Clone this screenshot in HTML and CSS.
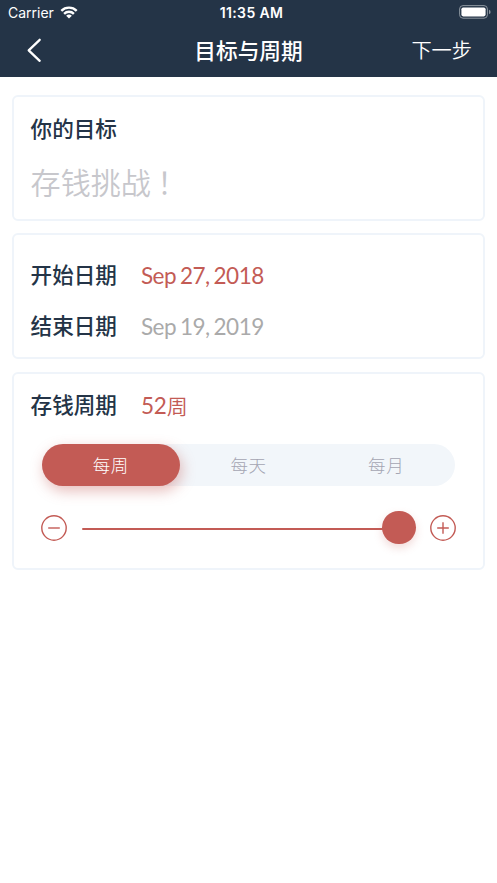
FILE: index.html
```html
<!DOCTYPE html>
<html lang="zh-CN">
<head>
<meta charset="utf-8">
<title>目标与周期</title>
<link rel="stylesheet" href="styles.css">
</head>
<body>
<header class="header">
  <div class="status">
    <div class="carrier">Carrier
      <svg class="wifi" width="18" height="13" viewBox="0 0 18 13" fill="none" stroke="#fff" stroke-width="2.4"><path d="M1.3 4.8a11 11 0 0 1 15.4 0"/><path d="M4.1 7.8a7 7 0 0 1 9.8 0"/><path d="M6.1 9.8a4.2 4.2 0 0 1 5.8 0L9 12.5z" fill="#fff" stroke="none"/></svg>
    </div>
    <div class="time">11:35 AM</div>
    <svg class="battery" width="32" height="14" viewBox="0 0 32 14"><rect x=".6" y=".6" width="27.8" height="12.6" rx="3.4" fill="none" stroke="#8c959f"/><rect x="2.4" y="2.4" width="24.2" height="9" rx="1.8" fill="#fff"/><path d="M30 4.7q1.6.5 1.6 2.2T30 9.1z" fill="#8c959f"/></svg>
  </div>
  <nav class="nav">
    <svg class="back" width="16" height="26" viewBox="0 0 16 26" fill="none" stroke="#fff" stroke-width="2.3" stroke-linecap="round" stroke-linejoin="round"><path d="M13.7 2.8 2.7 13.3l11 10.5"/></svg>
    <h1 class="title">目标与周期</h1>
    <span class="next">下一步</span>
  </nav>
</header>
<main class="content">
  <section class="card goal">
    <h2 class="label">你的目标</h2>
    <div class="placeholder">存钱挑战<span class="mark">！</span></div>
  </section>
  <section class="card dates">
    <div class="row"><h2 class="label">开始日期</h2><span class="value accent">Sep 27, 2018</span></div>
    <div class="row"><h2 class="label">结束日期</h2><span class="value muted">Sep 19, 2019</span></div>
  </section>
  <section class="card period">
    <div class="row"><h2 class="label">存钱周期</h2><span class="value count accent">52<span class="unit">周</span></span></div>
    <div class="tabs"><span class="tab active">每周</span><span class="tab">每天</span><span class="tab">每月</span></div>
    <div class="slider">
      <svg class="step" width="26" height="26" viewBox="0 0 26 26"><circle cx="13" cy="13" r="12.2"/><path d="M7.2 13h11.6"/></svg>
      <div class="track"><div class="line"></div><div class="knob"></div></div>
      <svg class="step" width="26" height="26" viewBox="0 0 26 26"><circle cx="13" cy="13" r="12.2"/><path d="M7.2 13h11.6M13 7.2v11.6"/></svg>
    </div>
  </section>
</main>
</body>
</html>
```
FILE: styles.css
```css
* { box-sizing: border-box; }
body {
  margin: 0;
  background: #fff;
  color: #243447;
  font-family: Lato, "Noto Sans CJK SC", sans-serif;
}
h1, h2 { margin: 0; font-weight: 500; }
.header { height: 77px; background: #243447; color: #fff; }
.status {
  display: grid;
  grid-template-columns: 1fr auto 1fr;
  align-items: center;
  height: 26px;
  padding: 0 6px 0 8px;
  font: 14px/26px Inter, sans-serif;
}
.carrier { display: flex; align-items: center; gap: 6px; }
.wifi { margin-top: -2px; }
.time { font-weight: 600; letter-spacing: .35px; margin-left: 4px; }
.battery { justify-self: end; margin-top: -2px; }
.nav {
  display: grid;
  grid-template-columns: 1fr auto 1fr;
  align-items: center;
  height: 47px;
  padding: 0 25px 0 26px;
}
.title { margin-left: -1px; font-family: "Noto Sans CJK SC", sans-serif; font-size: 21.7px; line-height: 32px; }
.next { justify-self: end; font: 350 20.2px/32px "Noto Sans CJK SC", sans-serif; }
.content { display: flex; flex-direction: column; gap: 12.3px; padding: 18px 12.4px 0; }
.card { border: 2px solid #eff4fa; border-radius: 6px; padding: 0 16.2px; }
.goal { height: 126.2px; padding-top: 15px; }
.label { font-family: "Noto Sans CJK SC", sans-serif; font-size: 21.6px; line-height: 32px; }
.placeholder {
  margin-top: 15px;
  font: 350 30.1px/44px "Noto Sans CJK SC", sans-serif;
  color: #c7c7cc;
}
.mark { margin-left: 6px; }
.dates { display: flex; flex-direction: column; gap: 19px; height: 126px; padding-top: 23.4px; }
.row { display: flex; align-items: center; gap: 24px; height: 32px; }
.value { margin-top: 2px; font-size: 22.5px; line-height: 32px; letter-spacing: -.5px; word-spacing: -1.4px; }
.count { letter-spacing: -.2px; }
.unit { font-size: 21px; font-weight: 350; }
.accent { color: #c35b55; }
.muted { color: #aaa; }
.period { height: 198px; padding-top: 15px; }
.row .label { margin-top: -1px; }
.tabs {
  display: flex;
  height: 42px;
  margin: 23.4px 11.4px 0;
  border-radius: 21px;
  background: #f2f6fa;
}
.tab {
  flex: 1;
  border-radius: 21px;
  text-align: center;
  font: 300 17.5px/41px "Noto Sans CJK SC", sans-serif;
  letter-spacing: .6px;
  color: #a4a5b2;
}
.active { background: #c35b55; color: #fff; box-shadow: 2px 5px 14px rgba(195, 91, 85, .4); }
.slider { display: flex; align-items: center; justify-content: space-between; margin: 24.6px 10.2px 0; height: 34px; }
.step { fill: none; stroke: #c35b55; stroke-width: 1.4; }
.track { display: flex; align-items: center; width: 334px; }
.line { flex: 1; height: 2.4px; margin: 2.6px -1px 0 0; border-radius: 1px 0 0 1px; background: #c35b55; }
.knob { width: 33.4px; height: 33.4px; border-radius: 50%; background: #c35b55; box-shadow: 0 4px 8px rgba(195, 91, 85, .22); }
```
